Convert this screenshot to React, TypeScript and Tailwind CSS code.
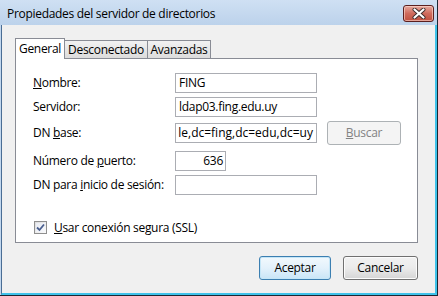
import React from "react";

const font = { fontFamily: '"Open Sans", "Noto Sans", sans-serif' };

function CloseButton() {
  return (
    <div className="mt-[5px] w-[31px] h-[17px] rounded-[3px] border border-[#5b1f1f] bg-gradient-to-b from-[#e5a99f] via-[#cf6a5c] to-[#c0503f] flex items-center justify-center shadow-[inset_0_0_0_1px_rgba(255,220,210,0.6)]">
      <svg width="14" height="11" viewBox="0 0 14 11">
        <path d="M2.5 1.5 L11.5 9.5 M11.5 1.5 L2.5 9.5" stroke="#3a2a2a" strokeWidth="4" strokeLinecap="round" />
        <path d="M2.5 1.5 L11.5 9.5 M11.5 1.5 L2.5 9.5" stroke="#ffffff" strokeWidth="2.2" strokeLinecap="round" />
      </svg>
    </div>
  );
}

function Label({ children }: { children: React.ReactNode }) {
  return <div className="w-[142px] text-[12px] text-black leading-none">{children}</div>;
}

function Input({ value, className = "" }: { value?: string; className?: string }) {
  return (
    <div
      className={
        "h-[20px] border border-[#abadb3] bg-white flex items-center px-[3px] text-[12px] text-black overflow-hidden whitespace-nowrap leading-none " +
        className
      }
    >
      {value}
    </div>
  );
}

function Btn({ children, w, primary = false }: { children: React.ReactNode; w: string; primary?: boolean }) {
  return (
    <div
      className={
        "h-[24px] rounded-[3px] border flex items-center justify-center text-[12px] text-black leading-none " +
        (primary
          ? "border-[#3c7fb1] bg-gradient-to-b from-[#f2f9fd] via-[#e3f1fb] to-[#c9e5f7] shadow-[inset_0_0_0_1px_#c5e6f7] "
          : "border-[#707070] bg-gradient-to-b from-[#f2f2f2] via-[#ebebeb] to-[#d5d5d5] shadow-[inset_0_0_0_1px_#fcfcfc] ") +
        w
      }
    >
      {children}
    </div>
  );
}

export default function App() {
  return (
    <div
      className="w-[438px] h-[296px] flex flex-col bg-[#c2d7ee] border-r border-b border-[#1b2733] overflow-hidden tracking-[-0.3px]"
      style={font}
    >
      <div className="h-[25px] flex items-start justify-between pl-[7px] pr-[3px] bg-gradient-to-b from-[#cfe0f3] to-[#bcd2eb]">
        <span className="mt-[6px] text-[12px] text-black leading-[16px]">
          Propiedades del servidor de directorios
        </span>
        <CloseButton />
      </div>
      <div className="flex-1 ml-[1px] border-l border-[#4a6d94] border-r-2 border-r-[#3ec2ea] border-b-2 border-b-[#3ec2ea] bg-[#f0f0f0] pl-[13px] pt-[13px] flex flex-col">
        {/* tabs */}
        <div className="h-[20px] flex items-end">
          <div className="h-[21px] -mb-[1px] relative z-10 w-[50px] bg-white border border-b-0 border-[#898c95] flex items-center justify-center text-[12px] text-black leading-none">
            General
          </div>
          <div className="h-[18px] w-[84px] -ml-[1px] bg-gradient-to-b from-[#f2f2f2] to-[#dcdcdc] border border-b-0 border-[#898c95] flex items-center justify-center text-[12px] text-black leading-none">
            Desconectado
          </div>
          <div className="h-[18px] w-[64px] -ml-[1px] bg-gradient-to-b from-[#f2f2f2] to-[#dcdcdc] border border-b-0 border-[#898c95] flex items-center justify-center text-[12px] text-black leading-none">
            Avanzadas
          </div>
        </div>
        {/* panel */}
        <div className="w-[403px] h-[185px] bg-white border border-[#898c95] pl-[17px] pt-[14px] flex flex-col">
          <div className="flex items-center">
            <Label>
              <span className="underline">N</span>ombre:
            </Label>
            <Input value="FING" className="w-[142px] border-[#3d7bad]" />
          </div>
          <div className="flex items-center mt-[4px]">
            <Label>Servidor:</Label>
            <Input value="ldap03.fing.edu.uy" className="w-[142px]" />
          </div>
          <div className="flex items-center mt-[4px] h-[24px]">
            <Label>
              DN <span className="underline">b</span>ase:
            </Label>
            <Input value="le,dc=fing,dc=edu,dc=uy" className="w-[142px] justify-end tracking-[0px]" />
            <div className="ml-[10px] w-[74px] h-[24px] rounded-[3px] border border-[#adb2b5] bg-[#f4f4f4] flex items-center justify-center text-[12px] text-[#838383] leading-none">
              <span className="underline">B</span>uscar
            </div>
          </div>
          <div className="flex items-center mt-[6px]">
            <Label>
              Número de <span className="underline">p</span>uerto:
            </Label>
            <Input value="636" className="w-[51px] h-[15px] justify-end pr-[2px]" />
          </div>
          <div className="flex items-center mt-[4px]">
            <Label>
              DN para <span className="underline">i</span>nicio de sesión:
            </Label>
            <Input className="w-[142px]" />
          </div>
          <div className="flex items-center mt-[26px] pl-[1px]">
            <div className="w-[13px] h-[13px] border border-[#8f8f8f] bg-gradient-to-br from-[#dcdcdc] to-[#fbfbfb] p-[1px]">
              <div className="w-full h-full bg-gradient-to-br from-[#e9ecf3] to-[#f7f8fb] flex items-center justify-center">
                <svg width="9" height="9" viewBox="0 0 9 9">
                  <path d="M1 4.5 L3.5 7 L8 1.5" fill="none" stroke="#4a5f8f" strokeWidth="1.8" />
                </svg>
              </div>
            </div>
            <span className="ml-[7px] text-[12px] text-black leading-none">
              <span className="underline">U</span>sar conexión segura (SSL)
            </span>
          </div>
        </div>
        {/* buttons */}
        <div className="flex mt-[13px] w-[403px] justify-end gap-[12px]">
          <Btn w="w-[72px]" primary>
            Aceptar
          </Btn>
          <Btn w="w-[75px]">Cancelar</Btn>
        </div>
      </div>
    </div>
  );
}
